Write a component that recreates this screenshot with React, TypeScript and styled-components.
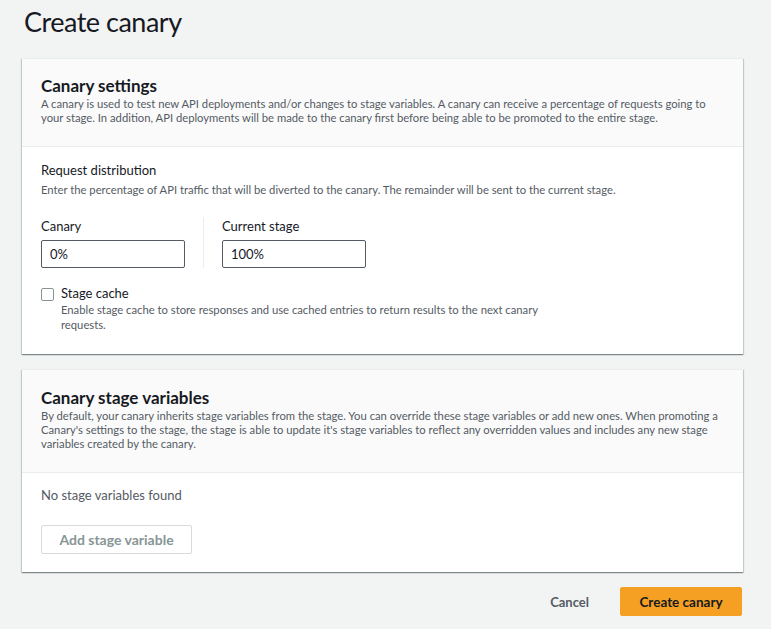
import React from "react";
import styled, { createGlobalStyle } from "styled-components";

const Global = createGlobalStyle`
  html, body { margin: 0; padding: 0; background: #f2f3f3; }
  body { font-family: "Lato", "Liberation Sans", sans-serif; color: #16191f; }
  * { box-sizing: border-box; }
`;

const Page = styled.div`
  padding: 0 28px 0 22px;
  min-height: 629px;
`;

const Title = styled.h1`
  margin: 0;
  padding: 6px 0 0 2px;
  height: 58px;
  font-size: 27px;
  font-weight: 400;
  letter-spacing: -0.5px;
  line-height: 32px;
  color: #16191f;
`;

const Card = styled.section`
  background: #fff;
  border-top: 1px solid #eaeded;
  box-shadow: 0 1px 1px 0 rgba(0, 28, 36, 0.3), 1px 1px 1px 0 rgba(0, 28, 36, 0.15),
    -1px 1px 1px 0 rgba(0, 28, 36, 0.15);
  margin-bottom: 15px;
`;

const CardHeader = styled.header<{ $top?: number }>`
  background: #fafafa;
  border-bottom: 1px solid #eaeded;
  padding: ${(p) => p.$top ?? 17}px 19px 21px;
`;

const CardTitle = styled.h2`
  margin: 0 0 1px;
  font-size: 17px;
  font-weight: 700;
  line-height: 20px;
`;

const Desc = styled.p`
  margin: 0;
  font-size: 11.25px;
  line-height: 14px;
  color: #545b64;
`;

const CardBody = styled.div<{ $pad?: string }>`
  padding: ${(p) => p.$pad || "14px 19px 22px"};
`;

const FieldTitle = styled.div`
  font-size: 13px;
  line-height: 18px;
`;

const FieldDesc = styled(Desc)`
  margin-top: 4px;
`;

const Columns = styled.div`
  display: flex;
  margin-top: 20px;
`;

const Column = styled.div<{ $divided?: boolean }>`
  width: ${(p) => (p.$divided ? "163px" : "182px")};
  padding-left: ${(p) => (p.$divided ? "0" : "18px")};
  border-right: ${(p) => (p.$divided ? "1px solid #eaeded" : "none")};
`;

const Label = styled.label`
  display: block;
  font-size: 13px;
  line-height: 18px;
  margin-bottom: 5px;
`;

const Input = styled.input`
  display: block;
  width: 144px;
  height: 28px;
  border: 1px solid #545b64;
  border-radius: 2px;
  padding: 0 8px;
  font-family: inherit;
  font-size: 13px;
  color: #16191f;
  background: #fff;
  outline: none;
`;

const CheckRow = styled.div`
  display: flex;
  gap: 7px;
  margin-top: 18px;
`;

const Box = styled.span`
  flex: none;
  width: 13px;
  height: 13px;
  margin-top: 2px;
  border: 1px solid #879596;
  border-radius: 2px;
  background: #fff;
`;

const CheckText = styled.div`
  max-width: 490px;
`;

const CheckLabel = styled.div`
  font-size: 13px;
  line-height: 15px;
`;

const CheckDesc = styled(Desc)`
  margin-top: 1px;
  line-height: 15px;
`;

const Empty = styled.div`
  font-size: 13px;
  line-height: 18px;
  color: #545b64;
`;

const GhostButton = styled.button`
  display: block;
  margin-top: 21px;
  width: 151px;
  height: 29px;
  background: #fff;
  border: 1px solid #d5dbdb;
  border-radius: 2px;
  font-family: inherit;
  font-size: 14px;
  font-weight: 700;
  color: #879596;
`;

const Footer = styled.div`
  display: flex;
  justify-content: flex-end;
  align-items: center;
  gap: 31px;
  margin-top: 5px;
`;

const LinkButton = styled.button`
  background: none;
  border: none;
  padding: 0;
  font-family: inherit;
  font-size: 13px;
  font-weight: 700;
  color: #545b64;
`;

const PrimaryButton = styled.button`
  width: 122px;
  height: 29px;
  margin-right: 1px;
  background: #f5a023;
  border: 1px solid #f5a023;
  border-radius: 2px;
  font-family: inherit;
  font-size: 13.5px;
  font-weight: 700;
  color: #16191f;
`;

export default function App() {
  return (
    <Page>
      <Global />
      <Title>Create canary</Title>
      <Card>
        <CardHeader>
          <CardTitle>Canary settings</CardTitle>
          <Desc>
            A canary is used to test new API deployments and/or changes to stage variables. A canary can receive a
            percentage of requests going to your stage. In addition, API deployments will be made to the canary first
            before being able to be promoted to the entire stage.
          </Desc>
        </CardHeader>
        <CardBody $pad="14px 19px 22px">
          <FieldTitle>Request distribution</FieldTitle>
          <FieldDesc>
            Enter the percentage of API traffic that will be diverted to the canary. The remainder will be sent to the
            current stage.
          </FieldDesc>
          <Columns>
            <Column $divided>
              <Label>Canary</Label>
              <Input defaultValue="0%" />
            </Column>
            <Column>
              <Label>Current stage</Label>
              <Input defaultValue="100%" />
            </Column>
          </Columns>
          <CheckRow>
            <Box />
            <CheckText>
              <CheckLabel>Stage cache</CheckLabel>
              <CheckDesc>
                Enable stage cache to store responses and use cached entries to return results to the next canary
                requests.
              </CheckDesc>
            </CheckText>
          </CheckRow>
        </CardBody>
      </Card>
      <Card>
        <CardHeader $top={18}>
          <CardTitle>Canary stage variables</CardTitle>
          <Desc>
            By default, your canary inherits stage variables from the stage. You can override these stage variables or
            add new ones. When promoting a Canary's settings to the stage, the stage is able to update it's stage
            variables to reflect any overridden values and includes any new stage variables created by the canary.
          </Desc>
        </CardHeader>
        <CardBody $pad="13px 19px 18px">
          <Empty>No stage variables found</Empty>
          <GhostButton>Add stage variable</GhostButton>
        </CardBody>
      </Card>
      <Footer>
        <LinkButton>Cancel</LinkButton>
        <PrimaryButton>Create canary</PrimaryButton>
      </Footer>
    </Page>
  );
}
